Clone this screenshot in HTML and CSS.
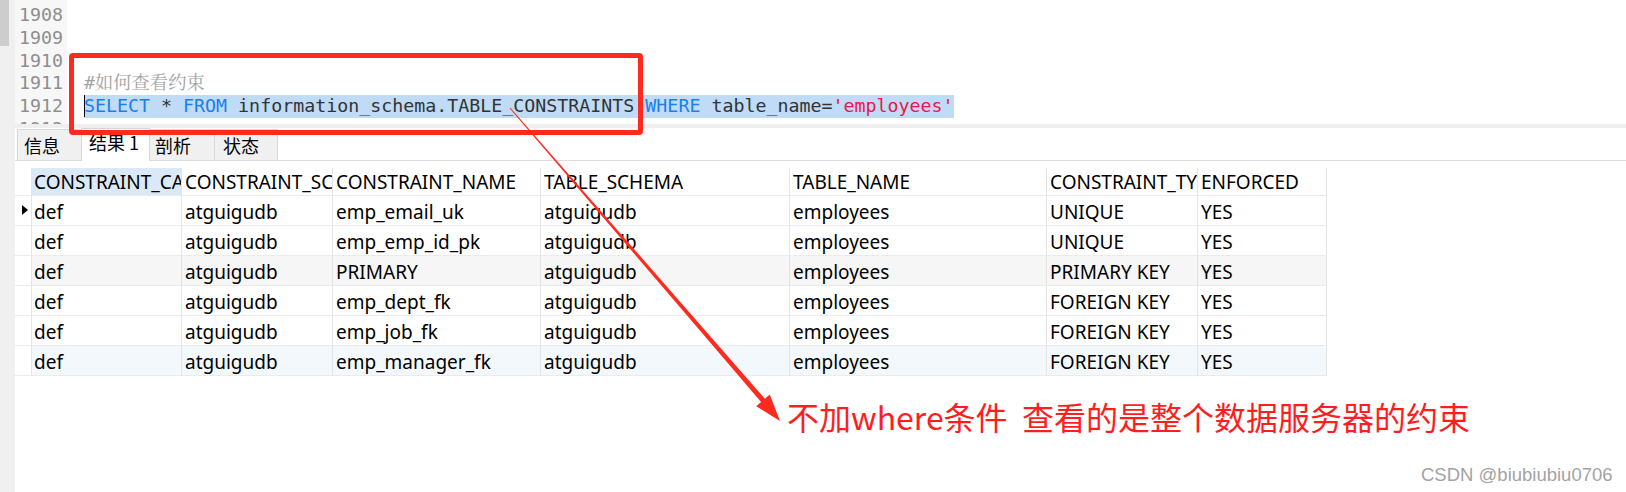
FILE: index.html
```html
<!DOCTYPE html>
<html lang="zh">
<head>
<meta charset="utf-8">
<title>Navicat</title>
<link rel="stylesheet" href="styles.css">
</head>
<body>
<div class="app">
  <div class="strip"><div class="thumb"></div></div>
  <div class="main">
    <div class="editor">
      <div class="gutter">
        <div class="ln">1908</div>
        <div class="ln">1909</div>
        <div class="ln">1910</div>
        <div class="ln">1911</div>
        <div class="ln">1912</div>
        <div class="ln">1913</div>
      </div>
      <div class="code">
        <div class="line"></div>
        <div class="line"></div>
        <div class="line"></div>
        <div class="line"><span class="cm">#如何查看约束</span></div>
        <div class="line"><span class="sel"><span class="caret"></span><span class="kw">SELECT</span> * <span class="kw">FROM</span> information_schema.TABLE_CONSTRAINTS <span class="kw">WHERE</span> table_name=<span class="str">'employees'</span></span></div>
        <div class="line"></div>
      </div>
    </div>
    <div class="band"></div>
    <div class="tabs">
      <div class="tab t1">信息</div>
      <div class="tab t2 active">结果 1</div>
      <div class="tab t3">剖析</div>
      <div class="tab t4">状态</div>
    </div>
    <div class="grid">
      <div class="row head">
        <div class="cell gut"></div>
        <div class="cell c1 hsel">CONSTRAINT_CATALOG</div>
        <div class="cell">CONSTRAINT_SCHEMA</div>
        <div class="cell">CONSTRAINT_NAME</div>
        <div class="cell">TABLE_SCHEMA</div>
        <div class="cell">TABLE_NAME</div>
        <div class="cell">CONSTRAINT_TYPE</div>
        <div class="cell">ENFORCED</div>
      </div>
      <div class="row">
        <div class="cell gut"><span class="marker"></span></div>
        <div class="cell c1">def</div>
        <div class="cell">atguigudb</div>
        <div class="cell">emp_email_uk</div>
        <div class="cell">atguigudb</div>
        <div class="cell">employees</div>
        <div class="cell">UNIQUE</div>
        <div class="cell">YES</div>
      </div>
      <div class="row">
        <div class="cell gut"></div>
        <div class="cell c1">def</div>
        <div class="cell">atguigudb</div>
        <div class="cell">emp_emp_id_pk</div>
        <div class="cell">atguigudb</div>
        <div class="cell">employees</div>
        <div class="cell">UNIQUE</div>
        <div class="cell">YES</div>
      </div>
      <div class="row alt">
        <div class="cell gut"></div>
        <div class="cell c1">def</div>
        <div class="cell">atguigudb</div>
        <div class="cell">PRIMARY</div>
        <div class="cell">atguigudb</div>
        <div class="cell">employees</div>
        <div class="cell">PRIMARY KEY</div>
        <div class="cell">YES</div>
      </div>
      <div class="row">
        <div class="cell gut"></div>
        <div class="cell c1">def</div>
        <div class="cell">atguigudb</div>
        <div class="cell">emp_dept_fk</div>
        <div class="cell">atguigudb</div>
        <div class="cell">employees</div>
        <div class="cell">FOREIGN KEY</div>
        <div class="cell">YES</div>
      </div>
      <div class="row">
        <div class="cell gut"></div>
        <div class="cell c1">def</div>
        <div class="cell">atguigudb</div>
        <div class="cell">emp_job_fk</div>
        <div class="cell">atguigudb</div>
        <div class="cell">employees</div>
        <div class="cell">FOREIGN KEY</div>
        <div class="cell">YES</div>
      </div>
      <div class="row hover">
        <div class="cell gut"></div>
        <div class="cell c1">def</div>
        <div class="cell">atguigudb</div>
        <div class="cell">emp_manager_fk</div>
        <div class="cell">atguigudb</div>
        <div class="cell">employees</div>
        <div class="cell">FOREIGN KEY</div>
        <div class="cell">YES</div>
      </div>
    </div>
  </div>
</div>

<div class="redbox"></div>
<svg class="arrow" width="1626" height="492" viewBox="0 0 1626 492">
  <polygon points="509.6,108.3 510.4,107.7 764.9,398.7 769.8,394.4 780,421 756.2,406.2 761.1,401.9" fill="#ff2a1f"/>
</svg>
<div class="note">不加where条件&nbsp;&nbsp;查看的是整个数据服务器的约束</div>
<div class="watermark">CSDN @biubiubiu0706</div>
</body>
</html>
```

FILE: styles.css
```css
html, body {
  margin: 0;
  padding: 0;
  background: #ffffff;
}
body {
  width: 1626px;
  height: 492px;
  overflow: hidden;
  position: relative;
  font-family: "Noto Sans", "Noto Sans CJK SC", sans-serif;
}
.app {
  display: flex;
  height: 492px;
}
.strip {
  flex: none;
  width: 15px;
  background: #f0f0f0;
}
.thumb {
  width: 9px;
  height: 46px;
  background: #cdcdcd;
}
.main {
  flex: 1;
  min-width: 0;
  display: flex;
  flex-direction: column;
}

/* editor */
.editor {
  height: 124px;
  display: flex;
  overflow: hidden;
  flex: none;
}
.gutter {
  flex: none;
  width: 52px;
  box-sizing: border-box;
  background: #f7f7f7;
  padding: 4px 4px 0 0;
  text-align: right;
  color: #8e8e8e;
}
.code {
  flex: 1;
  padding: 4px 0 0 17px;
  color: #333333;
}
.ln, .line {
  height: 22.75px;
  line-height: 22.75px;
  font-family: "DejaVu Sans Mono", "Noto Sans CJK SC", monospace;
  font-size: 18.3px;
  white-space: pre;
}
.cm {
  color: #a3a3a3;
  font-family: "DejaVu Sans Mono", "Noto Serif CJK SC", "Noto Sans CJK SC", monospace;
}
.sel {
  display: inline-block;
  height: 22.75px;
  background: #bfdbf6;
  vertical-align: top;
}
.caret {
  display: inline-block;
  width: 1px;
  height: 22px;
  margin-right: -1px;
  background: #000000;
  vertical-align: top;
}
.kw { color: #1a7ef0; }
.str { color: #ea1747; }

.band {
  flex: none;
  height: 4px;
  background: #efefef;
}

/* tabs */
.tabs {
  flex: none;
  height: 32px;
  display: flex;
  border-bottom: 1px solid #dcdcdc;
}
.tab {
  box-sizing: border-box;
  height: 31px;
  margin-top: 1px;
  background: #f0f0f0;
  border: 1px solid #d8d8d8;
  border-bottom: none;
  font-family: "Noto Sans CJK SC", sans-serif;
  font-size: 18px;
  line-height: 31px;
  color: #000000;
  padding-left: 6px;
  white-space: nowrap;
}
.t1 { width: 65px; margin-left: 2px; }
.t2 { width: 69px; margin-left: -1px; }
.t3 { width: 66px; margin-left: -1px; padding-left: 5px; }
.t4 { width: 64px; margin-left: -1px; padding-left: 8px; }
.tab.active {
  position: relative;
  height: 33px;
  margin-top: 0;
  margin-bottom: -1px;
  background: #ffffff;
  line-height: 27px;
  padding-left: 7px;
}

/* grid */
.grid {
  padding-top: 7px;
}
.row {
  display: grid;
  grid-template-columns: 17px 150px 151px 208px 249px 257px 151px 129px;
  height: 30px;
}
.row.head {
  height: 28px;
}
.cell {
  box-sizing: border-box;
  border-right: 1px solid #e4e4e4;
  border-bottom: 1px solid #ebebeb;
  padding-left: 3px;
  overflow: hidden;
  white-space: nowrap;
  font-family: "Noto Sans", sans-serif;
  font-size: 19px;
  line-height: 33px;
  color: #000000;
}
.head .cell {
  line-height: 29px;
}
.cell.c1 {
  padding-left: 2px;
}
.cell.gut {
  padding-left: 7px;
  background: #ffffff;
  line-height: 29px;
}
.cell.hsel {
  background: #dbe9f7;
}
.row.alt .cell:not(.gut) {
  background: #f6f6f6;
}
.row.hover .cell:not(.gut) {
  background: #f3f8fd;
}
.marker {
  display: inline-block;
  width: 0;
  height: 0;
  border-left: 6px solid #000000;
  border-top: 5px solid transparent;
  border-bottom: 5px solid transparent;
  vertical-align: middle;
  margin-top: -3px;
}

/* annotation overlay */
.redbox {
  position: absolute;
  left: 69px;
  top: 53px;
  width: 574px;
  height: 82px;
  box-sizing: border-box;
  border: 5px solid #ff2a1f;
  border-radius: 4px;
}
.arrow {
  position: absolute;
  left: 0;
  top: 0;
  pointer-events: none;
}
.note {
  position: absolute;
  left: 787px;
  top: 400px;
  font-family: "Noto Sans CJK SC", sans-serif;
  font-size: 32px;
  line-height: 32px;
  color: #ff1e1e;
  white-space: nowrap;
}
.watermark {
  position: absolute;
  left: 1421px;
  top: 465px;
  font-family: "Liberation Sans", Arial, sans-serif;
  font-size: 18.5px;
  line-height: 20px;
  color: #a3a3a3;
  white-space: nowrap;
}
```
